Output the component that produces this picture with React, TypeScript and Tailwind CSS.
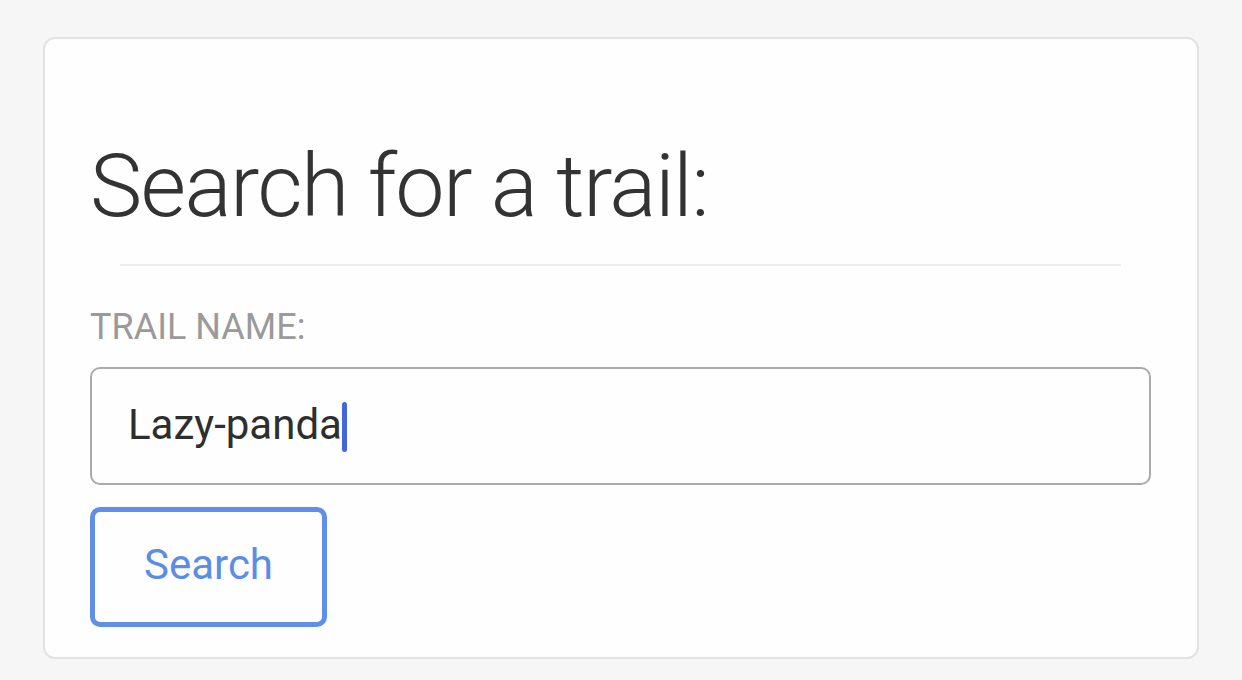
import React from "react";

export default function App() {
  return (
    <div
      className="w-[1242px] h-[680px] bg-[#f6f6f6] pt-[37px] pl-[43px]"
      style={{ fontFamily: "Roboto, 'Noto Sans', sans-serif" }}
    >
      <div className="w-[1156px] h-[622px] bg-[#fefefe] border-2 border-[#e2e2e2] rounded-[12px] pl-[45px] pr-[46px] pt-[103px]">
        <h1 className="text-[88px] leading-none font-light text-[#333333] tracking-[-1.6px]">
          Search for a trail:
        </h1>
        <div className="mx-[30px] mt-[34px] h-[2px] bg-[#eeeeee]" />
        <div className="mt-[43px] text-[36px] leading-none text-[#9a9a9a] font-normal">
          TRAIL NAME:
        </div>
        <div className="mt-[22px] h-[118px] border-2 border-[#aaaaaa] rounded-[10px] flex items-center pl-[36px] pb-[2px]">
          <span className="text-[42px] text-[#2e2e2e] leading-none">Lazy-panda</span>
          <span className="inline-block w-[5px] h-[50px] bg-[#4466dd] rounded-full mt-[4px]" />
        </div>
        <button className="mt-[22px] w-[237px] h-[120px] border-[5px] border-[#5f8fe8] rounded-[10px] text-[42px] text-[#5b8de6] leading-none flex items-center justify-center pb-[4px]">
          Search
        </button>
      </div>
    </div>
  );
}
